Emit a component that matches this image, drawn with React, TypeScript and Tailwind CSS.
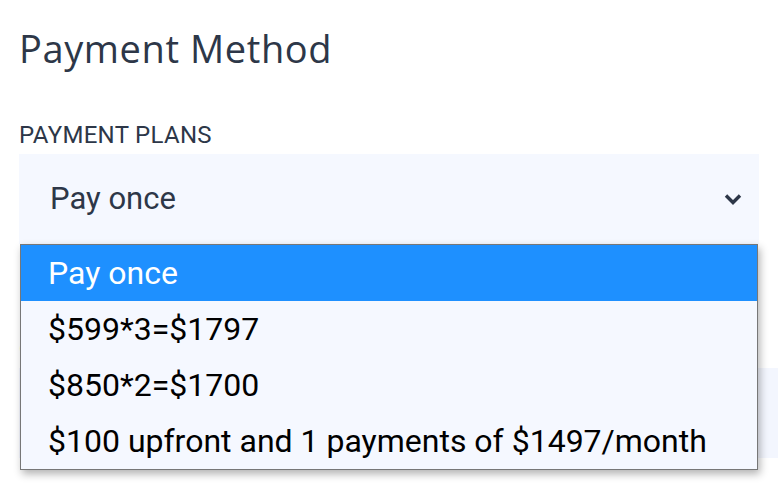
import React from 'react'

const plans = [
    'Pay once',
    '$599*3=$1797',
    '$850*2=$1700',
    '$100 upfront and 1 payments of $1497/month',
]

const App = () => {
    return (
        <div className="relative h-[488px] w-[778px] overflow-hidden bg-white font-['Roboto',sans-serif]">
            <div className="pl-[19px] pt-[22px]">
                <h2 className="font-['Open_Sans',sans-serif] text-[38px] font-normal leading-[52px] tracking-[0.6px] text-[#2d3748]">
                    Payment Method
                </h2>
                <p className="mt-[48px] text-[24px] leading-[26px] tracking-[0.3px] text-[#2d3748]">PAYMENT PLANS</p>
                <div className="mt-[6px] flex h-[90px] w-[740px] items-center justify-between bg-[#f5f8ff] pl-[31px] pr-[16px]">
                    <span className="text-[31px] text-[#2d3748]">Pay once</span>
                    <svg width="20" height="14" viewBox="0 0 20 14" fill="none">
                        <path d="M3 3.5l7 7 7-7" stroke="#2d3748" strokeWidth="3.4" />
                    </svg>
                </div>
                <p className="mt-[92px] text-[24px] leading-[26px] text-[#d97706]">CARD DETAILS</p>
                <div className="mt-[6px] h-[90px] w-[770px] bg-[#f3f6fe]"></div>
            </div>

            <div className="absolute left-[20px] top-[244px] w-[738px] border border-[#777] bg-[#f5f8ff] shadow-[2px_4px_8px_rgba(0,0,0,0.3)]">
                {plans.map((plan, i) => (
                    <div
                        key={plan}
                        className={`flex h-[56px] items-center pl-[27px] text-[32px] ${
                            i === 0 ? 'bg-[#1e90ff] text-white' : 'text-black'
                        }`}
                    >
                        {plan}
                    </div>
                ))}
            </div>
        </div>
    )
}

export default App
